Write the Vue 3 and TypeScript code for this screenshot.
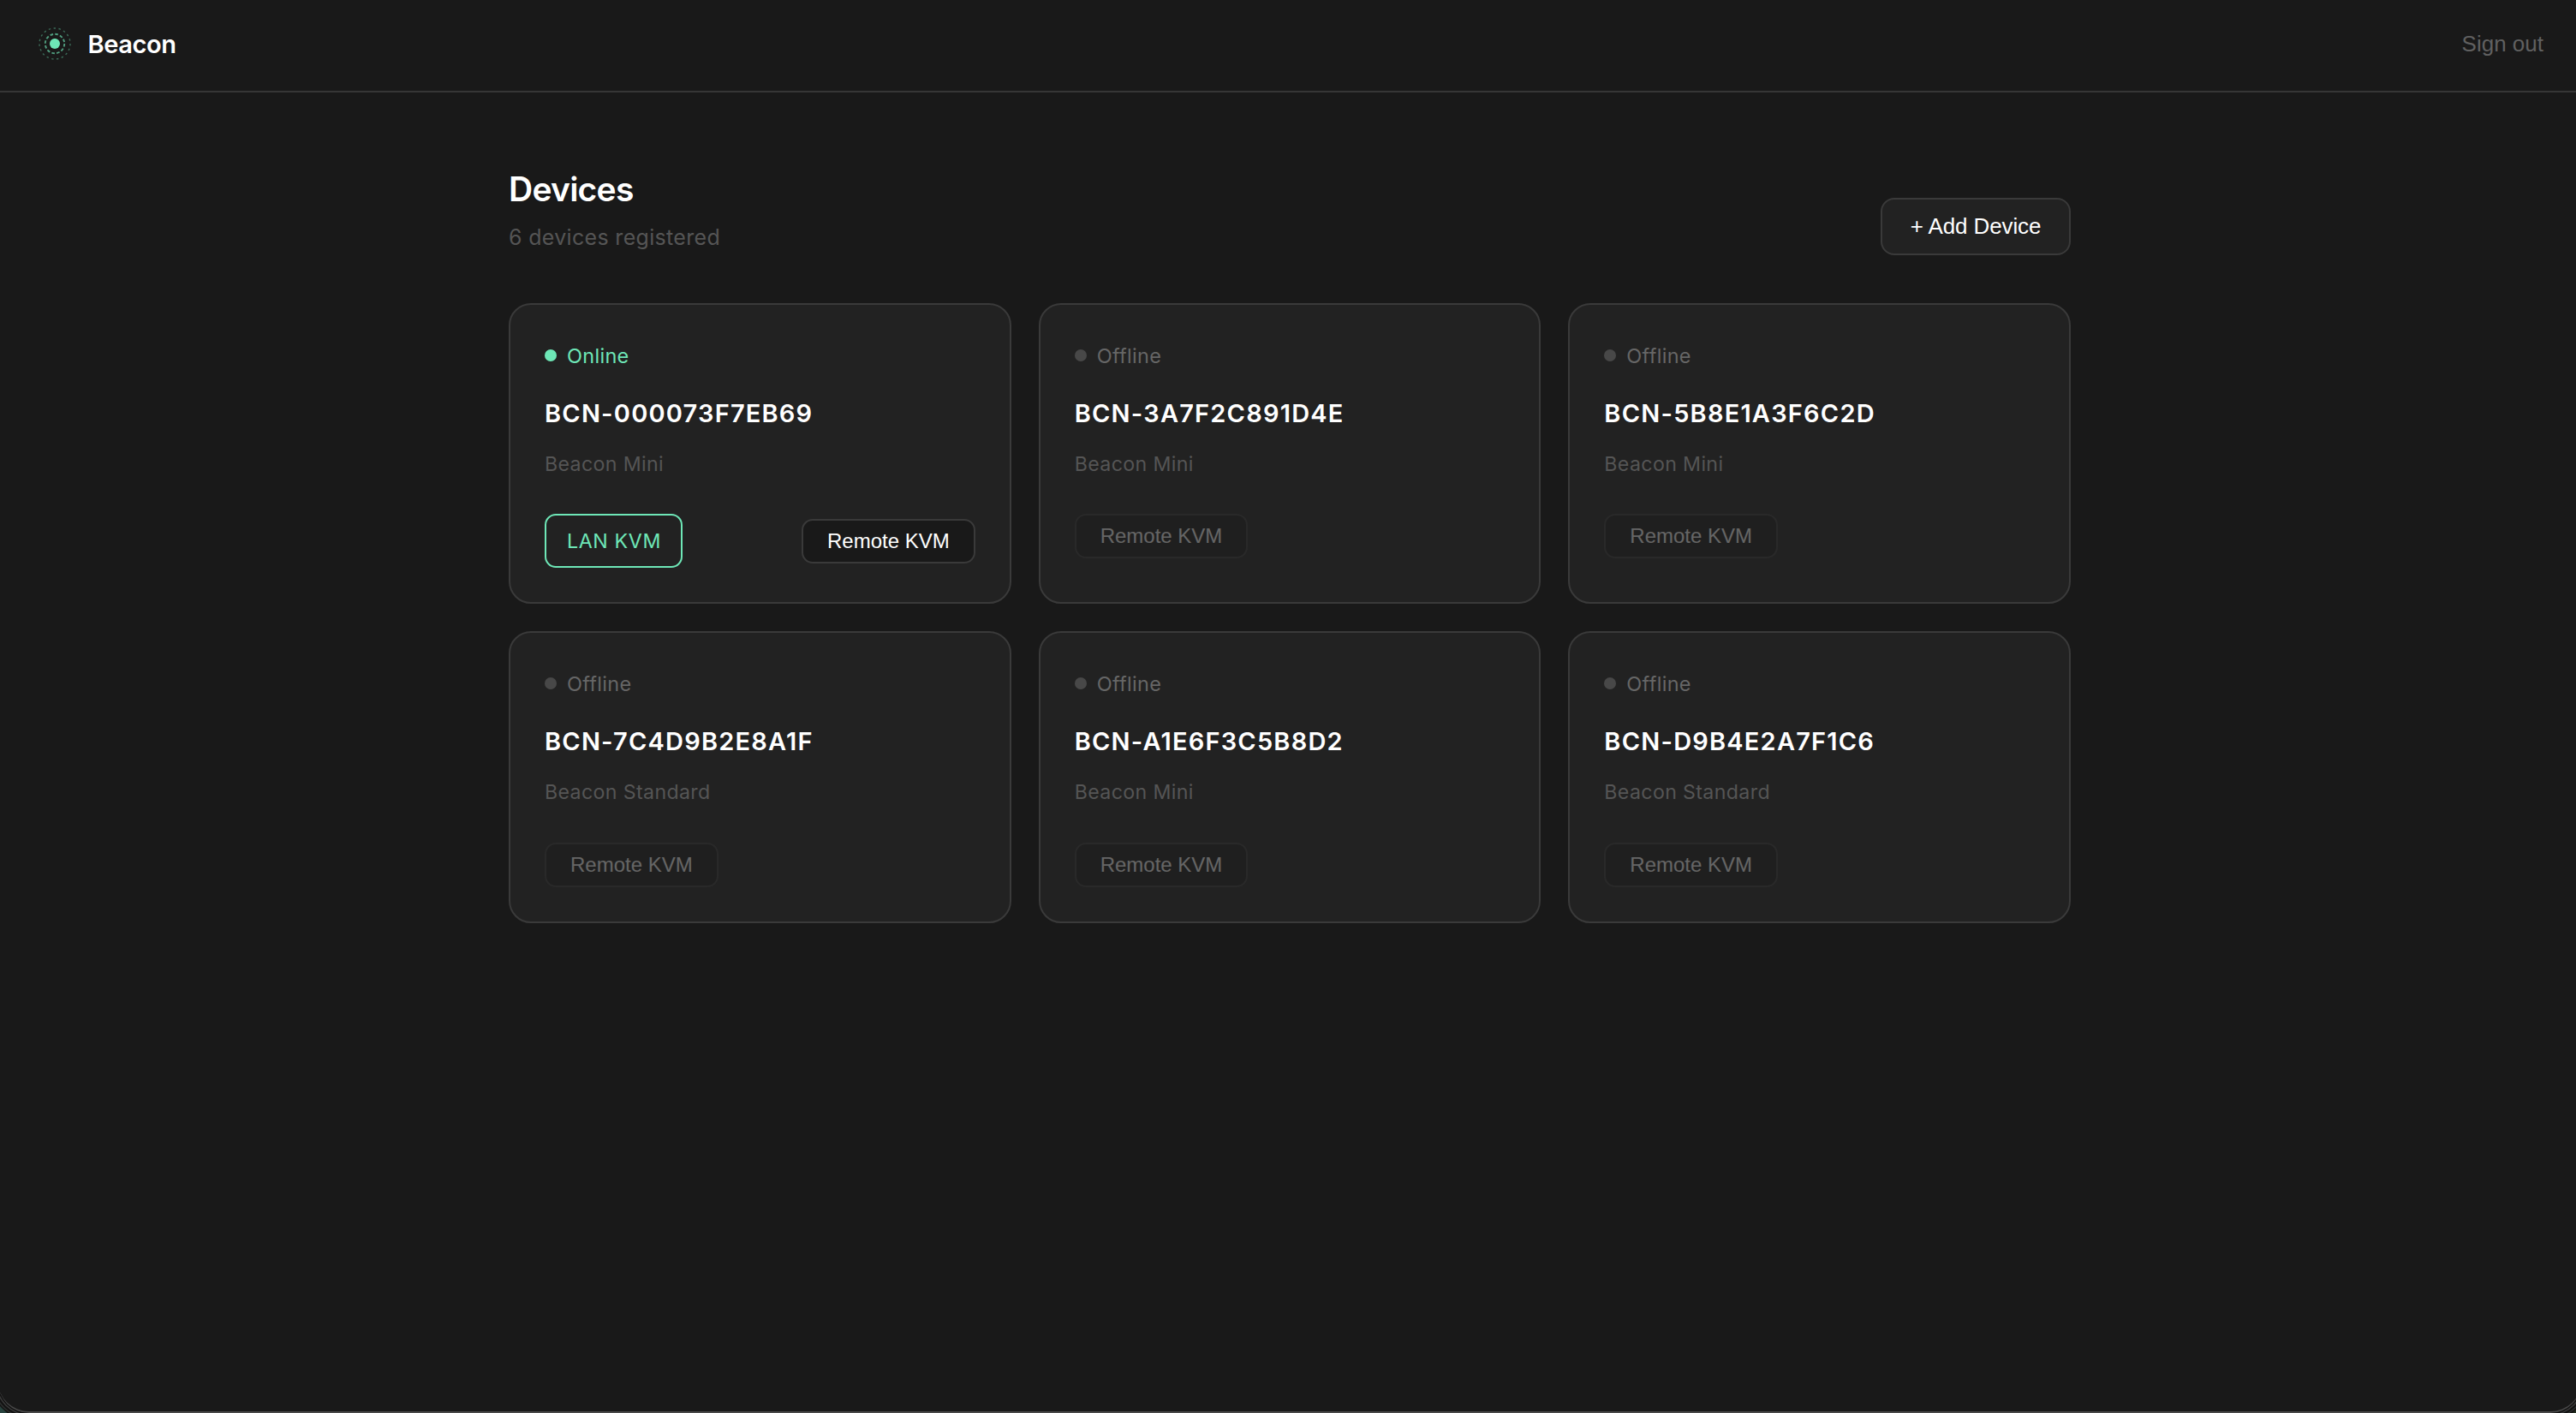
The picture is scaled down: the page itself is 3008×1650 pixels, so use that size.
<script setup lang="ts">
interface Device {
  id: string
  model: string
  online: boolean
}

const devices: Device[] = [
  { id: 'BCN-000073F7EB69', model: 'Beacon Mini', online: true },
  { id: 'BCN-3A7F2C891D4E', model: 'Beacon Mini', online: false },
  { id: 'BCN-5B8E1A3F6C2D', model: 'Beacon Mini', online: false },
  { id: 'BCN-7C4D9B2E8A1F', model: 'Beacon Standard', online: false },
  { id: 'BCN-A1E6F3C5B8D2', model: 'Beacon Mini', online: false },
  { id: 'BCN-D9B4E2A7F1C6', model: 'Beacon Standard', online: false },
]
</script>

<template>
  <div class="desktop">
    <div class="window">
      <header class="topbar">
        <div class="brand">
          <svg class="logo" viewBox="0 0 48 48" fill="none" stroke="#6ee7b7">
            <circle cx="24" cy="24" r="18" stroke-width="1.4" stroke-dasharray="2.4 3.52" opacity="0.4" />
            <circle cx="24" cy="24" r="11.2" stroke-width="1.9" stroke-dasharray="3.6 2.26" opacity="0.65" />
            <circle cx="24" cy="24" r="6" fill="#6ee7b7" stroke="none" />
          </svg>
          <span class="brand-name">Beacon</span>
        </div>
        <button class="sign-out">Sign out</button>
      </header>

      <main class="content">
        <div class="page-head">
          <div>
            <h1 class="title">Devices</h1>
            <p class="subtitle">{{ devices.length }} devices registered</p>
          </div>
          <button class="add">+ Add Device</button>
        </div>

        <div class="grid">
          <article v-for="d in devices" :key="d.id" class="card">
            <div class="status" :class="{ online: d.online }">
              <span class="dot"></span>
              <span>{{ d.online ? 'Online' : 'Offline' }}</span>
            </div>
            <h2 class="name">{{ d.id }}</h2>
            <p class="model">{{ d.model }}</p>
            <div class="actions">
              <a v-if="d.online" class="lan">LAN KVM</a>
              <button class="remote" :disabled="!d.online">Remote KVM</button>
            </div>
          </article>
        </div>
      </main>
    </div>
  </div>
</template>

<style>
body {
  margin: 0;
  background: #191919;
}
</style>

<style scoped>
.desktop {
  height: 1650px;
  overflow: hidden;
  display: flex;
  background: linear-gradient(90deg, #28433e 50%, #232e1f 50%);
  font-family: Inter, 'Liberation Sans', sans-serif;
}

.window {
  flex: none;
  box-sizing: border-box;
  width: 3016px;
  height: 1650px;
  margin-left: -2px;
  background: #191919;
  border-bottom: 2px solid #484848;
  border-radius: 0 0 36px 36px;
  box-shadow: 0 0 0 1.5px #121212, 0 0 0 3px #3a3a3a, 0 0 0 5px #121212, 0 0 0 6.5px #2c2f2e, 0 0 0 8px #141414;
}

.topbar {
  height: 102px;
  padding: 0 42px 4px;
  border-bottom: 2px solid #363636;
  display: flex;
  align-items: center;
  justify-content: space-between;
}

.brand {
  display: flex;
  align-items: center;
  gap: 14.5px;
}

.logo {
  width: 48px;
  height: 48px;
}

.brand-name {
  font-size: 29px;
  font-weight: 600;
  line-height: 47px;
  letter-spacing: -0.4px;
  color: #fff;
}

button {
  box-sizing: border-box;
  margin: 0;
  padding: 0;
  font-family: 'Liberation Sans', Arial, sans-serif;
  color: #fff;
}

.sign-out {
  border: none;
  background: none;
  font-size: 26px;
  line-height: 30px;
  color: #606060;
  margin-right: 2px;
}

.content {
  width: 1824px;
  margin: 0 auto;
  padding-top: 80px;
}

.page-head {
  display: flex;
  align-items: flex-end;
  justify-content: space-between;
  margin-bottom: 56px;
}

.title {
  margin: 0 0 3px;
  font-size: 39px;
  font-weight: 600;
  line-height: 65px;
  letter-spacing: -0.75px;
  color: #fff;
}

.subtitle {
  margin: 0;
  font-size: 25px;
  line-height: 42px;
  letter-spacing: 0.32px;
  color: #555;
}

.add {
  width: 222px;
  height: 67px;
  border: 2px solid #3a3a3a;
  border-radius: 16px;
  background: #222;
  font-size: 26px;
  letter-spacing: -0.1px;
}

.grid {
  display: grid;
  grid-template-columns: repeat(3, 1fr);
  gap: 32px;
}

.card {
  padding: 40.4px 40px 40px;
  border: 2px solid #3a3a3a;
  border-radius: 26px;
  background: #222;
}

.status {
  display: flex;
  align-items: center;
  gap: 12px;
  height: 38.4px;
  margin-bottom: 24px;
  font-size: 23.5px;
  line-height: 39px;
  letter-spacing: 0.3px;
  color: #666;
}

.dot {
  width: 14px;
  height: 14px;
  margin-bottom: 1px;
  border-radius: 50%;
  background: #484848;
}

.status.online {
  color: #6ee7b7;
}

.status.online .dot {
  background: #6ee7b7;
}

.name {
  margin: 0 0 16px;
  font-size: 29px;
  font-weight: 600;
  line-height: 48px;
  letter-spacing: 1.2px;
  color: #fff;
}

.model {
  margin: 0 0 39.2px;
  font-size: 23.2px;
  line-height: 38.4px;
  letter-spacing: 0.35px;
  color: #555;
}

.actions {
  display: flex;
  align-items: center;
  justify-content: space-between;
}

.lan {
  box-sizing: border-box;
  width: 161px;
  height: 62.9px;
  padding: 1px 0 0 1px;
  border: 2px solid #6ee7b7;
  border-radius: 13px;
  font-size: 23.2px;
  font-weight: 400;
  line-height: 58.9px;
  letter-spacing: 0.65px;
  text-align: center;
  color: #6ee7b7;
}

.remote {
  width: 202.7px;
  height: 52px;
  border: 2px solid #3a3a3a;
  border-radius: 13px;
  background: #191919;
  font-size: 24px;
}

.remote:disabled {
  opacity: 0.3;
}
</style>
